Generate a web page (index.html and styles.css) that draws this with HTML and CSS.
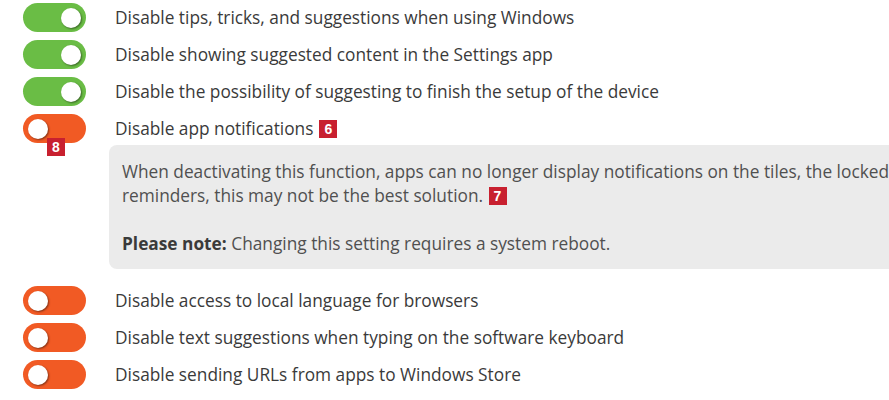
FILE: index.html
```html
<!DOCTYPE html>
<html lang="en">
<head>
    <meta charset="UTF-8">
    <title>Privacy settings</title>
    <link rel="stylesheet" href="styles.css">
</head>
<body>
    <div class="page">
        <ul class="settings">
            <li class="row">
                <span class="toggle on"><i></i></span>
                <span class="label">Disable tips, tricks, and suggestions when using Windows</span>
            </li>
            <li class="row">
                <span class="toggle on"><i></i></span>
                <span class="label">Disable showing suggested content in the Settings app</span>
            </li>
            <li class="row">
                <span class="toggle on"><i></i></span>
                <span class="label">Disable the possibility of suggesting to finish the setup of the device</span>
            </li>
            <li class="row">
                <span class="toggle"><i></i></span>
                <span class="label">Disable app notifications</span>
                <span class="badge">6</span>
                <span class="badge under">8</span>
            </li>
            <li class="info">
                <p>When deactivating this function, apps can no longer display notifications on the tiles, the locked<br>reminders, this may not be the best solution. <span class="badge">7</span></p>
                <p><b>Please note:</b> Changing this setting requires a system reboot.</p>
            </li>
            <li class="row">
                <span class="toggle"><i></i></span>
                <span class="label">Disable access to local language for browsers</span>
            </li>
            <li class="row">
                <span class="toggle"><i></i></span>
                <span class="label">Disable text suggestions when typing on the software keyboard</span>
            </li>
            <li class="row">
                <span class="toggle"><i></i></span>
                <span class="label">Disable sending URLs from apps to Windows Store</span>
            </li>
        </ul>
    </div>
</body>
</html>
```

FILE: styles.css
```css
* {margin:0;padding:0;}
html, body {overflow: hidden;}
body {
    background: #fff;
    font-family: "Open Sans", "Noto Sans", sans-serif;
    font-size: 17.3px;
    color: #3a3a3a;
}
li {list-style: none;}
.page {
    width: 1200px;
    padding-left: 23px;
}
.settings {
    margin-top: -1px;
}
.row {
    position: relative;
    display: flex;
    align-items: center;
    height: 37px;
}
.toggle {
    display: flex;
    align-items: center;
    justify-content: flex-start;
    box-sizing: border-box;
    width: 63px;
    height: 29px;
    padding: 0 5px;
    margin-right: 29px;
    border-radius: 15px;
    background: #f15a24;
}
.toggle.on {
    justify-content: flex-end;
    background: #6abd45;
}
.toggle i {
    width: 20px;
    height: 20px;
    border-radius: 50%;
    background: #fff;
    box-shadow: 1px 1px 2px rgba(0,0,0,.45);
}
.label {
    white-space: nowrap;
}
.badge {
    display: inline-block;
    width: 18px;
    height: 18px;
    margin-left: 6px;
    background: #c8202f;
    color: #fff;
    font-family: "Liberation Sans", Arial, sans-serif;
    font-weight: bold;
    font-size: 14px;
    line-height: 18px;
    text-align: center;
    vertical-align: 1px;
}
.badge.under {
    position: absolute;
    left: 24px;
    top: 28px;
    margin: 0;
}
.info {
    margin: -2px 0 13px 86px;
    padding: 15px 13px 13px;
    background: #ebebeb;
    border-radius: 8px;
    color: #505050;
    line-height: 24px;
    white-space: nowrap;
}
.info p + p {
    margin-top: 24px;
}
.info .badge {
    margin-left: 1px;
}
.info b {
    color: #3a3a3a;
}
```
